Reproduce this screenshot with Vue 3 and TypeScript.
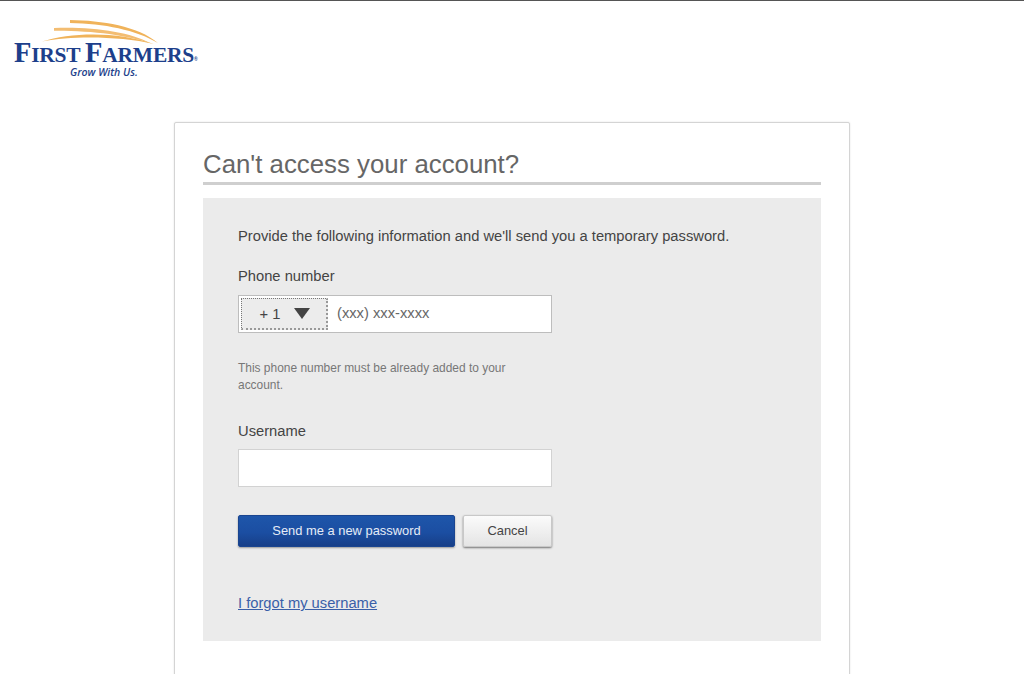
<script setup lang="ts">
const heading: string = "Can't access your account?";
</script>

<template>
  <div class="page">
    <header class="brand">
      <svg class="rays" width="118" height="25" viewBox="0 0 118 25" aria-hidden="true">
        <path d="M28 0 C60 0.5 96 6 116 23 C94 10 62 3.5 28 3Z" fill="#f0b35a" />
        <path d="M12 8 C50 6.5 88 12 108 23 C86 15.5 50 10.5 12 10.8Z" fill="#f3bd72" />
        <path d="M0 21.6 C30 12 76 11.5 112 24 C78 16.5 32 15.5 0 21.6Z" fill="#f0b35a" />
      </svg>
      <div class="wordmark"><span class="cap">F</span>IRST <span class="cap">F</span>ARMERS<sup>®</sup></div>
      <div class="tagline">Grow With Us.</div>
    </header>

    <main class="card">
      <h1 class="title">{{ heading }}</h1>
      <section class="panel">
        <p class="intro">Provide the following information and we'll send you a temporary password.</p>

        <label class="label">Phone number</label>
        <div class="field phone">
          <div class="code">
            <span>+ 1</span>
            <svg width="16" height="11" viewBox="0 0 16 11" aria-hidden="true"><path d="M0 0H16L8 11Z" fill="#444" /></svg>
          </div>
          <span class="placeholder">(xxx) xxx-xxxx</span>
        </div>
        <p class="hint">This phone number must be already added to your account.</p>

        <label class="label username">Username</label>
        <div class="field"></div>

        <div class="actions">
          <button class="btn primary" type="button">Send me a new password</button>
          <button class="btn secondary" type="button">Cancel</button>
        </div>

        <a class="link" href="#">I forgot my username</a>
      </section>
    </main>
  </div>
</template>

<style>
html, body { margin: 0; height: 674px; overflow: hidden; background: #fff; }
</style>

<style scoped>
.page {
  height: 674px;
  overflow: hidden;
  box-sizing: border-box;
  border-top: 1px solid #555;
  font-family: "Liberation Sans", Arial, sans-serif;
  color: #444;
}
.brand {
  height: 121px;
  box-sizing: border-box;
  padding: 19px 0 0 14px;
  display: flex;
  flex-direction: column;
}
.rays { display: block; margin-left: 28px; margin-bottom: -2px; }
.wordmark {
  font-family: "Liberation Serif", "Times New Roman", serif;
  font-weight: 700;
  font-size: 21.5px;
  line-height: 19px;
  letter-spacing: -0.25px;
  color: #1d3f8b;
  white-space: nowrap;
}
.cap { font-size: 28.5px; }
.wordmark sup { font-size: 5px; line-height: 0; font-family: "Liberation Sans", sans-serif; vertical-align: 1px; }
.tagline {
  margin: 1px 0 0 56px;
  font-family: "Open Sans", sans-serif;
  font-size: 10.5px;
  line-height: 12px;
  font-style: italic;
  font-weight: 600;
  color: #1d3f8b;
}
.card {
  width: 676px;
  height: 600px;
  margin: 0 auto;
  box-sizing: border-box;
  padding: 0 28px;
  background: #fff;
  border: 1px solid #d4d4d4;
  border-radius: 2px;
  box-shadow: 0 0 2px rgba(0, 0, 0, 0.12);
}
.title {
  margin: 0;
  padding-top: 26px;
  box-sizing: border-box;
  border-bottom: 3px solid #cfcfcf;
  height: 62px;
  font-size: 25.8px;
  line-height: 30px;
  font-weight: 400;
  color: #666;
}
.panel {
  margin-top: 13px;
  height: 443px;
  box-sizing: border-box;
  padding: 28px 35px 0;
  background: #ebebeb;
  display: flex;
  flex-direction: column;
  align-items: flex-start;
}
.intro { margin: 0; font-size: 14.72px; line-height: 20px; color: #444; }
.label { margin-top: 20px; font-size: 14.72px; line-height: 20px; color: #444; }
.username { margin-top: 27px; }
.field {
  width: 314px;
  height: 38px;
  margin-top: 8px;
  box-sizing: border-box;
  background: #fff;
  border: 1px solid #d2d2d2;
}
.phone {
  display: flex;
  align-items: center;
  margin-top: 9px;
  border: 1px solid #bdbdbd;
}
.code {
  width: 87px;
  height: 32px;
  margin-left: 2px;
  padding-left: 2px;
  box-sizing: border-box;
  border: 1px dotted #777;
  border-right: 2px dotted #999;
  border-bottom: 2px dotted #999;
  display: flex;
  align-items: center;
  justify-content: center;
  gap: 14px;
  background: #ececec;
  font-size: 14.72px;
  color: #444;
}
.placeholder { margin-left: 9px; padding-bottom: 2px; font-size: 14.72px; color: #666; }
.hint {
  width: 300px;
  margin: 27px 0 0;
  font-size: 11.95px;
  line-height: 17px;
  color: #777;
}
.actions { display: flex; gap: 8px; margin-top: 28px; }
.btn {
  height: 32px;
  box-sizing: border-box;
  padding: 0 0 1px;
  font-family: inherit;
  font-size: 12.9px;
  border-radius: 2px;
}
.primary {
  width: 217px;
  border: 1px solid #1a4590;
  background: linear-gradient(#1e56aa, #1b4ea2 55%, #173f88);
  color: #e6ecf6;
  box-shadow: 0 1px 2px rgba(0, 0, 0, 0.35);
}
.secondary {
  width: 89px;
  border: 1px solid #c8c8c8;
  background: linear-gradient(#fbfbfb, #e4e4e4);
  color: #444;
  box-shadow: 0 1px 2px rgba(0, 0, 0, 0.5);
}
.link {
  margin-top: 46px;
  font-size: 14.72px;
  line-height: 20px;
  color: #3a5fa8;
  text-decoration: underline;
}
</style>
